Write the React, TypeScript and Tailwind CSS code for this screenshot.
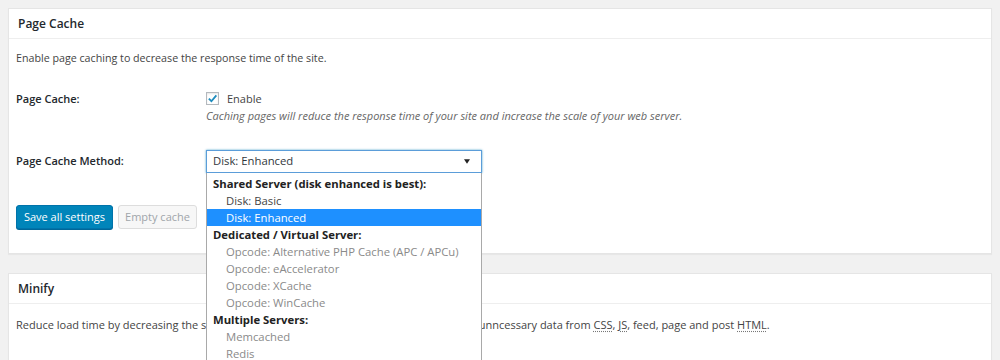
import React from 'react';

const methodOptions = [
    { label: 'Shared Server (disk enhanced is best):', group: true },
    { label: 'Disk: Basic' },
    { label: 'Disk: Enhanced', selected: true },
    { label: 'Dedicated / Virtual Server:', group: true },
    { label: 'Opcode: Alternative PHP Cache (APC / APCu)', disabled: true },
    { label: 'Opcode: eAccelerator', disabled: true },
    { label: 'Opcode: XCache', disabled: true },
    { label: 'Opcode: WinCache', disabled: true },
    { label: 'Multiple Servers:', group: true },
    { label: 'Memcached', disabled: true },
    { label: 'Redis', disabled: true },
];

function Abbr({ children }: { children: React.ReactNode }) {
    return <span className="underline decoration-dotted decoration-[#777] underline-offset-2">{children}</span>;
}

export default function App() {
    return (
        <div className="h-[360px] overflow-hidden bg-[#f1f1f1] px-2 pt-2 font-['Open_Sans',sans-serif] text-[11px] text-[#23282d]">
            {/* Page Cache */}
            <div className="h-[246px] border border-[#e5e5e5] bg-white shadow-[0_1px_1px_rgba(0,0,0,0.04)]">
                <div className="flex h-[30px] items-center border-b border-[#eee] px-[9px] text-[12px] font-semibold">
                    Page Cache
                </div>
                <div className="px-[7px]">
                    <p className="mt-[11px] text-[10.7px] leading-[17px] text-[#444]">
                        Enable page caching to decrease the response time of the site.
                    </p>

                    <div className="mt-[23px] flex">
                        <div className="w-[190px] leading-[17px] font-semibold">Page Cache:</div>
                        <div className="leading-[17px]">
                            <label className="flex items-center gap-[8px] text-[#444]">
                                <span className="flex h-[13px] w-[13px] items-center justify-center border border-[#b4b9be] bg-white shadow-[inset_0_1px_2px_rgba(0,0,0,0.1)]">
                                    <svg viewBox="0 0 12 12" className="h-[11px] w-[11px]">
                                        <path d="M2 6.2 L4.8 9 L10.2 2.6" fill="none" stroke="#1e8cbe" strokeWidth="2" />
                                    </svg>
                                </span>
                                Enable
                            </label>
                            <p className="italic text-[#666]">
                                Caching pages will reduce the response time of your site and increase the scale of your web server.
                            </p>
                        </div>
                    </div>

                    <div className="mt-[26px] flex items-center">
                        <div className="w-[190px] font-semibold">Page Cache Method:</div>
                        <div className="relative z-10 h-[23px] w-[276px] text-[11.3px]">
                            <div className="flex h-full items-center justify-between border border-[#5b9dd9] bg-white pl-[6px] pr-[11px] text-[#32373c] shadow-[0_0_2px_rgba(30,140,190,0.8)]">
                                <span>Disk: Enhanced</span>
                                <svg viewBox="0 0 8 6" className="h-[5px] w-[6px]">
                                    <path d="M0 0 H8 L4 6 Z" fill="#222" />
                                </svg>
                            </div>
                            <ul className="absolute left-0 top-full w-full border-x border-[#a9a9a9] bg-white pt-[2px]">
                                {methodOptions.map((opt) => (
                                    <li
                                        key={opt.label}
                                        className={`h-[17px] leading-[17px] ${opt.group
                                            ? 'pl-[6px] font-bold text-[#222]'
                                            : opt.selected
                                                ? 'bg-[#1e90ff] pl-[19px] text-white'
                                                : opt.disabled
                                                    ? 'pl-[19px] text-[#8a8a8a]'
                                                    : 'pl-[19px] text-[#444]'
                                            }`}
                                    >
                                        {opt.label}
                                    </li>
                                ))}
                            </ul>
                        </div>
                    </div>

                    <div className="mt-[32px] flex gap-[5px]">
                        <button className="h-[24px] w-[97px] rounded-[3px] border border-[#0073aa] bg-[#0085ba] text-white shadow-[0_1px_0_#006799]">
                            Save all settings
                        </button>
                        <button className="h-[24px] w-[79px] rounded-[3px] border border-[#ddd] bg-[#f7f7f7] text-[#a0a5aa]">
                            Empty cache
                        </button>
                    </div>
                </div>
            </div>

            {/* Minify */}
            <div className="mt-[19px] h-[120px] border border-[#e5e5e5] bg-white shadow-[0_1px_1px_rgba(0,0,0,0.04)]">
                <div className="flex h-[30px] items-center border-b border-[#eee] px-[9px] text-[12px] font-semibold">
                    Minify
                </div>
                <p className="mt-[12px] px-[7px] leading-[17px] text-[#444]">
                    Reduce load time by decreasing the si
                    <span className="tracking-[-0.38px]">ze and number of <Abbr>CSS</Abbr> and <Abbr>JS</Abbr> files. Automatically remove </span>
                    unncessary data from <Abbr>CSS</Abbr>, <Abbr>JS</Abbr>, feed, page and post <Abbr>HTML</Abbr>.
                </p>
            </div>
        </div>
    );
}
